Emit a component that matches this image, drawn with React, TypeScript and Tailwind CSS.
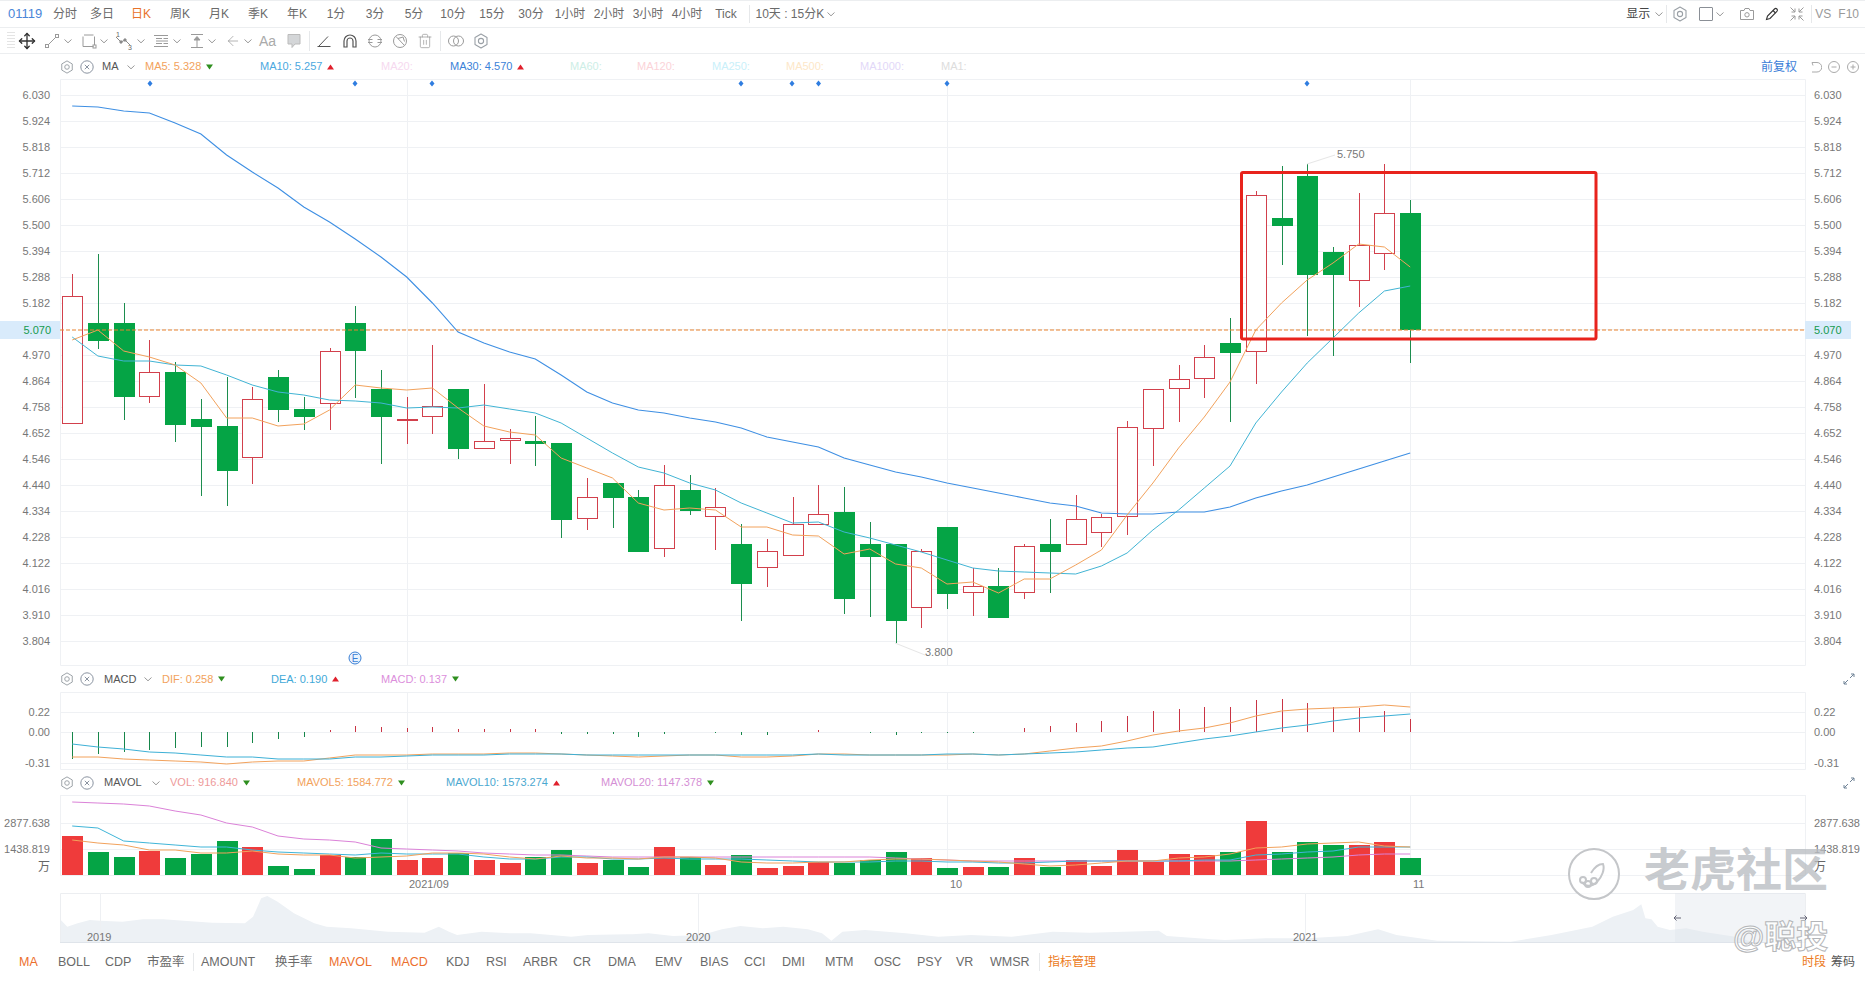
import React from "react";
import { Move, ArrowLeft, Trash2 } from "lucide-react";

type C = [string, number, number, number, number];
const X = (i: number) => 72.2 + 25.73 * i;
const candles: C[] = [
  ["r",274,296,424,424],["g",254,323,341,349],["g",303,323,397,420],["r",340,372,397,403],["g",362,372,425,442],
  ["g",399,419,427,496],["g",377,426,471,506],["r",387,399,458,484],["g",370,377,410,422],["g",397,409,417,430],
  ["r",348,351,404,430],["g",306,323,351,398],["g",370,389,417,464],["r",397,419,421,444],["r",345,406,417,434],
  ["g",389,389,449,459],["r",384,441,449,449],["r",429,438,441,464],["g",416,441,444,466],["g",443,443,520,538],
  ["r",478,497,519,530],["g",483,483,498,528],["g",490,497,552,552],["r",465,485,549,557],["g",475,490,511,515],
  ["r",488,507,517,550],["g",524,544,584,621],["r",539,551,568,587],["r",497,524,556,556],["r",485,514,525,525],
  ["g",487,512,599,614],["g",522,544,557,617],["g",544,544,621,643],["r",549,551,608,628],["g",527,527,594,609],
  ["r",568,586,593,616],["g",568,586,618,618],["r",544,546,593,599],["g",519,544,552,593],["r",495,519,545,545],
  ["r",514,517,533,547],["r",421,427,517,535],["r",389,389,429,466],["r",365,379,389,422],["r",345,357,379,398],
  ["g",318,343,353,422],["r",191,195,352,384],["g",166,218,226,265],["g",164,176,275,336],["g",247,252,275,356],
  ["r",193,245,281,307],["r",164,213,254,270],["g",200,213,330,363],
];
const ma30 = [106,107,111,113,123,134,155,172,188,207,222,239,257,277,303,332,343,352,359,375,392,403,410,413,418,422,428,437,442,447,458,465,472,477,483,488,493,498,503,506,513,514,514,512,512,507,498,491,485,477,469,461,453];
const ma10 = [337,356,361,361,365,366,375,385,392,395,400,401,403,408,407,408,405,409,413,423,438,453,467,473,483,490,503,513,523,522,532,538,545,552,560,568,571,572,573,574,566,553,530,510,488,466,423,392,363,338,313,291,286];
const ma5 = [340,330,351,357,365,383,418,418,426,424,410,385,388,390,388,408,426,432,435,458,468,478,503,510,508,510,527,527,535,536,554,549,564,568,584,582,593,579,579,565,550,515,483,448,417,382,330,303,280,263,244,247,267];
const macdBars = [759,754,752,750,748,747,747,743,739,737,730,726,727,728,727,729,729,729,729,734,734,734,737,734,732,733,735,735,732,730,732,733,735,733,733,733,732,728,726,723,721,716,711,709,707,707,700,699,703,707,708,711,719];
const dif = [757,757,759,760,761,762,764,762,761,761,758,755,755,755,754,754,754,753,753,754,755,756,757,756,755,755,757,757,756,754,754,755,755,755,755,754,755,754,751,748,746,741,735,731,728,723,716,711,709,708,707,705,707];
const dea = [744,747,749,752,753,755,757,757,759,759,759,757,757,756,755,755,755,754,754,754,755,755,755,755,755,755,755,755,755,754,755,755,755,755,754,754,755,754,753,752,750,748,747,743,739,736,732,728,725,721,718,716,714];
const vols = [836,852,857,851,858,854,841,847,866,869,855,857,839,860,858,853,860,863,857,850,863,860,867,847,857,865,855,868,866,862,863,860,852,858,868,867,867,858,867,860,866,850,862,854,855,852,821,852,842,845,845,842,858];
const mv20 = [802,803,804,806,811,815,823,827,836,839,840,842,848,849,850,851,853,854,855,855,856,857,857,857,857,857,857,857,857,857,857,857,858,859,860,861,861,861,861,861,861,861,861,861,861,861,860,859,858,857,855,854,854];
const mv10 = [826,828,841,843,845,847,847,850,852,853,854,855,853,854,854,854,857,859,859,857,857,859,859,858,859,859,859,860,861,862,862,862,861,861,862,862,863,863,862,861,861,861,861,861,860,860,855,854,852,851,847,847,847];
const mv5 = [840,843,845,850,850,853,853,851,854,855,855,858,857,856,853,853,854,857,859,856,858,858,859,857,857,858,862,863,863,862,862,860,859,859,860,861,862,864,866,865,863,861,861,858,857,854,848,847,844,843,842,846,847];

const pts = (a: number[]) => a.map((y, i) => `${X(i).toFixed(1)},${y}`).join(" ");

const navRaw: [number, number, number][] = [
  ...[[149,780],[165,800],[190,790],[220,780],[245,782],[300,785],[350,778],[400,778],[450,782],[520,788],[600,790],[620,770],[640,715],[655,708],[680,725],[720,760],[770,790],[800,800],[860,805],[950,815],[1040,818],[1075,800],[1100,815],[1120,825],[1180,815],[1250,820],[1300,820],[1400,830],[1440,825],[1568,822]].map(([a,b]) => [0,a,b] as [number,number,number]),
  ...[[0,825],[70,820],[130,828],[200,825],[250,808],[295,798],[350,805],[400,800],[460,808],[495,820],[518,842],[545,815],[600,810],[700,820],[780,830],[860,825],[960,830],[1060,815],[1150,818],[1320,812],[1340,828],[1450,838]].map(([a,b]) => [620,a,b] as [number,number,number]),
  ...[[0,840],[100,835],[200,835],[300,828],[375,808],[420,825],[520,842],[700,845],[800,825],[900,800],[950,770],[1000,750],[1020,733],[1030,775],[1045,778],[1060,800],[1090,810],[1130,805],[1170,815],[1250,830],[1300,848]].map(([a,b]) => [1225,a,b] as [number,number,number]),
];
const navPts = navRaw.map(([o, a, b]) => `${(o + a / 2.45).toFixed(1)},${(660 + b / 3).toFixed(1)}`).join(" ");

const priceLabels = ["6.030","5.924","5.818","5.712","5.606","5.500","5.394","5.288","5.182","","4.970","4.864","4.758","4.652","4.546","4.440","4.334","4.228","4.122","4.016","3.910","3.804"];
const diamonds = [150,355,432,741,792,818.5,947,1307];
const grid = "#eff1f4";
const TXT = "fill-[#777] text-[11px]";

function Chev({ c = "#999" }: { c?: string }) {
  return (
    <svg width="10" height="10" viewBox="0 0 10 10" fill="none" stroke={c} strokeWidth="1" className="shrink-0">
      <path d="M1.5 3.5 5 6.8 8.5 3.5" />
    </svg>
  );
}
function Tri({ up, className }: { up?: boolean; className?: string }) {
  return (
    <svg width="7" height="6" viewBox="0 0 7 6" className={className}>
      {up ? <path d="M3.5 0.5 7 5.5H0z" fill="#e0202c" /> : <path d="M3.5 5.5 7 0.5H0z" fill="#2f8f1f" />}
    </svg>
  );
}
function Gear({ s = 14, c = "#9aa0a6" }: { s?: number; c?: string }) {
  return (
    <svg width={s} height={s} viewBox="0 0 16 16" fill="none" stroke={c} strokeWidth="1.1" className="shrink-0">
      <path d="M8 1 14 4.5V11.5L8 15 2 11.5V4.5z" strokeLinejoin="round" />
      <circle cx="8" cy="8" r="2.6" />
    </svg>
  );
}
function CloseC() {
  return (
    <svg width="14" height="14" viewBox="0 0 14 14" fill="none" stroke="#8a93a0" strokeWidth="1" className="shrink-0">
      <circle cx="7" cy="7" r="6.2" />
      <path d="M4.8 4.8 9.2 9.2M9.2 4.8 4.8 9.2" />
    </svg>
  );
}
function Expand() {
  return (
    <svg width="12" height="12" viewBox="0 0 12 12" fill="none" stroke="#6f8296" strokeWidth="1">
      <path d="M7 5 11 1M8 1h3v3M5 7 1 11M1 8v3h3" />
    </svg>
  );
}
function Stat({ w, c, t, up, down }: { w: string; c: string; t: string; up?: boolean; down?: boolean }) {
  return (
    <div className={`${w} flex items-center shrink-0 text-[11px] whitespace-nowrap ${c}`}>
      <span>{t}</span>
      {up && <Tri up className="ml-[5px]" />}
      {down && <Tri className="ml-[5px]" />}
    </div>
  );
}
function LegendHead({ label, w, ml }: { label: string; w: string; ml: string }) {
  return (
    <>
      <Gear />
      <span className="ml-[6px]"><CloseC /></span>
      <span className={`${ml} text-[11px] text-[#555] ${w}`}>{label}</span>
      <Chev />
      <span className="w-[9px] shrink-0" />
    </>
  );
}
const S = ({ children, w = 16, h = 16 }: { children: React.ReactNode; w?: number; h?: number }) => (
  <svg width={w} height={h} viewBox={`0 0 ${w} ${h}`} fill="none" stroke="#9a9a9a" strokeWidth="1" className="shrink-0">{children}</svg>
);
const topItems = ["日K","周K","月K","季K","年K","1分","3分","5分","10分","15分","30分","1小时","2小时","3小时","4小时","Tick"];
const tabs: [string, string, boolean][] = [
  ["MA","w-[39px]",true],["BOLL","w-[47px]",false],["CDP","w-[42px]",false],["市盈率","w-[46px]",false],["|","w-[8px]",false],
  ["AMOUNT","w-[74px]",false],["换手率","w-[54px]",false],["MAVOL","w-[62px]",true],["MACD","w-[55px]",true],["KDJ","w-[40px]",false],
  ["RSI","w-[37px]",false],["ARBR","w-[50px]",false],["CR","w-[35px]",false],["DMA","w-[47px]",false],["EMV","w-[45px]",false],
  ["BIAS","w-[44px]",false],["CCI","w-[38px]",false],["DMI","w-[43px]",false],["MTM","w-[49px]",false],["OSC","w-[43px]",false],
  ["PSY","w-[39px]",false],["VR","w-[34px]",false],["WMSR","w-[49px]",false],["|","w-[9px]",false],
];

export default function App() {
  return (
    <div className="relative w-[1865px] h-[981px] bg-white flex flex-col overflow-hidden font-['Liberation_Sans','Noto_Sans_CJK_SC',sans-serif] text-[12px] text-[#6a6a6a]">
      {/* Top bar */}
      <div className="h-[28px] shrink-0 border-t border-b border-[#eceef0] flex items-center pl-[8px] pr-[6px]">
        <span className="w-[39px] text-[13px] text-[#4a86d8]">01119</span>
        <span className="w-[37px] pl-[6px]">分时</span>
        <span className="w-[37.5px] pl-[6px]">多日</span>
        {topItems.map((t) => (
          <span key={t} className={`w-[39px] text-center whitespace-nowrap ${t === "日K" ? "text-[#e8722a]" : ""}`}>{t}</span>
        ))}
        <span className="ml-[3px] w-px h-[18px] bg-[#e6e8ea]" />
        <span className="ml-[6px] whitespace-nowrap">10天 : 15分K</span>
        <span className="ml-[2px]"><Chev /></span>
        <span className="ml-auto whitespace-nowrap text-[#444]">显示</span>
        <span className="ml-[4px]"><Chev /></span>
        <span className="ml-[2px] w-px h-[18px] bg-[#e6e8ea]" />
        <span className="ml-[5px]"><Gear s={16} /></span>
        <span className="ml-[11px] w-[14px] h-[14px] border border-[#8a8f96] rounded-[1px]" />
        <span className="ml-[2px]"><Chev /></span>
        <span className="ml-[14px]">
          <S><path d="M1.5 4.5H5L6 2.5H10L11 4.5H14.5V13.5H1.5z" /><circle cx="8" cy="8.8" r="2.2" /></S>
        </span>
        <span className="ml-[9px]">
          <svg width="16" height="16" viewBox="0 0 16 16" fill="none" stroke="#333" strokeWidth="1.1"><path d="M2.5 13.5 3.5 10 10.5 3a1.6 1.6 0 0 1 2.4 2.4L6 12.5z" /><path d="M9 4.5 11.5 7" /></svg>
        </span>
        <span className="ml-[9px]">
          <S><path d="M1.5 1.5 6 6M6 2.5V6H2.5M14.5 1.5 10 6M10 2.5V6H13.5M1.5 14.5 6 10M6 13.5V10H2.5M14.5 14.5 10 10M10 13.5V10H13.5" /></S>
        </span>
        <span className="ml-[6px] w-px h-[18px] bg-[#e6e8ea]" />
        <span className="ml-[3px] text-[#999] whitespace-nowrap">VS</span>
        <span className="ml-[7px] text-[#999] whitespace-nowrap">F10</span>
      </div>

      {/* Drawing toolbar */}
      <div className="h-[26px] shrink-0 border-b border-[#eceef0] flex items-center">
        <span className="ml-[7px] w-[8px] h-[18px] shrink-0 bg-[repeating-linear-gradient(to_bottom,#e4e4e4_0,#e4e4e4_1px,transparent_1px,transparent_3px)]" />
        <span className="ml-[3px]"><Move size={18} strokeWidth={1.8} color="#333" /></span>
        <span className="ml-[8px]"><S><rect x="1.5" y="11.5" width="3" height="3" /><rect x="11.5" y="1.5" width="3" height="3" /><path d="M4.5 11.5 11.5 4.5" /></S></span>
        <span className="ml-[3px]"><Chev /></span>
        <span className="ml-[8px]"><S><path d="M3 2H12.5M2 3.5V13.5H12.5M13.5 3.5V12" /><rect x="12" y="12" width="3" height="3" /></S></span>
        <span className="ml-[2px]"><Chev /></span>
        <span className="ml-[6px]">
          <svg width="18" height="18" viewBox="0 0 18 18" fill="none" stroke="#8a8a8a" strokeWidth="1">
            <path d="M1 5 6 10 10 8 15 13" />
            <circle cx="6" cy="10" r="1.2" fill="#8a8a8a" /><circle cx="10" cy="8" r="1.2" fill="#8a8a8a" />
            <text x="1" y="5" fontSize="7" fill="#666" stroke="none">1</text>
            <text x="13" y="18" fontSize="7" fill="#666" stroke="none">3</text>
          </svg>
        </span>
        <span className="ml-[3px]"><Chev /></span>
        <span className="ml-[7px]"><S><path d="M1 2.5H15M3 5.5H9M3 8H15M3 10.5H9M1 13.5H15" /><path d="M10.5 5.5H15M10.5 10.5H15" /></S></span>
        <span className="ml-[3px]"><Chev /></span>
        <span className="ml-[7px]"><S><path d="M2 1.5H14M2 14.5H14M8 14.5V5" /><path d="M5 7 8 3.5 11 7z" fill="#9a9a9a" /></S></span>
        <span className="ml-[2px]"><Chev /></span>
        <span className="ml-[8px]"><ArrowLeft size={16} strokeWidth={1} color="#8f8f8f" /></span>
        <span className="ml-[2px]"><Chev /></span>
        <span className="ml-[6px] w-[18px] text-[14px] text-[#aaa] leading-none">Aa</span>
        <span className="ml-[9px]"><svg width="16" height="16" viewBox="0 0 16 16"><path d="M2 1.5H14V11H9L6 14.5V11H2z" fill="#d4d6d8" stroke="#bbb" /></svg></span>
        <span className="ml-[7px] w-px h-[20px] bg-[#e6e8ea] shrink-0" />
        <span className="ml-[6px]"><svg width="16" height="16" viewBox="0 0 16 16" fill="none" stroke="#555" strokeWidth="1"><path d="M3 13 12 3.5M1.5 13.5H14.5" /></svg></span>
        <span className="ml-[10px]"><svg width="16" height="16" viewBox="0 0 16 16" fill="none" stroke="#555" strokeWidth="1.2"><path d="M2 14V8a6 6 0 0 1 12 0v6h-3V8a3 3 0 0 0-6 0v6z" /></svg></span>
        <span className="ml-[9px]"><S><circle cx="8" cy="8" r="6" /><path d="M1 6.5H5.5M10.5 6.5H15M1 9.5H5.5M10.5 9.5H15" /></S></span>
        <span className="ml-[9px]"><S><circle cx="8" cy="8" r="6.5" /><path d="M4 3.5 12.5 12.5M6 5.5 11 4 12.5 8.5" /></S></span>
        <span className="ml-[9px]"><Trash2 size={16} strokeWidth={1} color="#8f8f8f" /></span>
        <span className="ml-[7px] w-px h-[20px] bg-[#e6e8ea] shrink-0" />
        <span className="ml-[6px]"><svg width="18" height="16" viewBox="0 0 18 16" fill="none" stroke="#9a9a9a"><circle cx="6.5" cy="8" r="5" /><circle cx="11.5" cy="8" r="5" /></svg></span>
        <span className="ml-[8px]"><Gear s={16} /></span>
      </div>

      {/* MA legend */}
      <div className="h-[25px] shrink-0 flex items-center pl-[60px] pr-[6px]">
        <LegendHead label="MA" w="w-[24px]" ml="ml-[8px]" />
        <Stat w="w-[115px]" c="text-[#f2a25c]" t="MA5: 5.328" down />
        <Stat w="w-[121px]" c="text-[#4ba8e0]" t="MA10: 5.257" up />
        <Stat w="w-[69px]" c="text-[#f6d9ef]" t="MA20:" />
        <Stat w="w-[120px]" c="text-[#3b82d8]" t="MA30: 4.570" up />
        <Stat w="w-[67px]" c="text-[#cdeee6]" t="MA60:" />
        <Stat w="w-[75px]" c="text-[#fbd3d8]" t="MA120:" />
        <Stat w="w-[74px]" c="text-[#c9f0fa]" t="MA250:" />
        <Stat w="w-[74px]" c="text-[#fde7c8]" t="MA500:" />
        <Stat w="w-[81px]" c="text-[#e2d8f8]" t="MA1000:" />
        <Stat w="w-[60px]" c="text-[#dddddd]" t="MA1:" />
        <span className="ml-auto text-[#3b7dd8]">前复权</span>
        <span className="ml-[13px]">
          <svg width="12" height="12" viewBox="0 0 12 12" fill="none" stroke="#aaa"><path d="M2 1.5 3 4.5M2 1.5H7a4.5 4.5 0 0 1 0 9.5H2" /></svg>
        </span>
        <span className="ml-[6px]"><svg width="12" height="12" viewBox="0 0 12 12" fill="none" stroke="#aaa"><circle cx="6" cy="6" r="5.5" /><path d="M3.5 6h5" /></svg></span>
        <span className="ml-[7px]"><svg width="12" height="12" viewBox="0 0 12 12" fill="none" stroke="#aaa"><circle cx="6" cy="6" r="5.5" /><path d="M3.5 6h5M6 3.5v5" /></svg></span>
      </div>

      {/* Main candles */}
      <svg width="1865" height="587" viewBox="0 79 1865 587" className="shrink-0 block">
        <path d="M60.5 79.5H1805.5V665.5H60.5z" fill="none" stroke={grid} />
        {priceLabels.map((l, i) => (
          <g key={i}>
            <line x1="60" x2="1805" y1={95.5 + 26 * i} y2={95.5 + 26 * i} stroke={grid} />
            {l && <text x="50" y={99 + 26 * i} textAnchor="end" className={TXT}>{l}</text>}
            {l && <text x="1814" y={99 + 26 * i} className={TXT}>{l}</text>}
          </g>
        ))}
        {[407.5, 947.5, 1410.5].map((x) => <line key={x} x1={x} x2={x} y1="79" y2="666" stroke={grid} />)}
        {diamonds.map((x) => <path key={x} d={`M${x} 80.5l2.5 3-2.5 3-2.5-3z`} fill="#2f7de0" />)}
        <rect x="0" y="321" width="60" height="18" fill="#d9ebfb" />
        <rect x="1805" y="321" width="46" height="18" fill="#d9ebfb" />
        <text x="51" y="334" textAnchor="end" className="fill-[#159a4e] text-[11px]">5.070</text>
        <text x="1814" y="334" className="fill-[#159a4e] text-[11px]">5.070</text>
        {candles.map(([t, a, b, c, d], i) => {
          const x = Math.round(X(i));
          const col = t === "r" ? "#d2404c" : "#05a445";
          return (
            <g key={i}>
              <line x1={x + 0.5} x2={x + 0.5} y1={a} y2={d} stroke={t === "r" ? col : "#1c8d4e"} />
              {t === "r" ? (
                <rect x={x - 9.5} y={b + 0.5} width="20" height={c - b - 1} fill="#fff" stroke={col} />
              ) : (
                <rect x={x - 10} y={b} width="21" height={c - b} fill={col} />
              )}
            </g>
          );
        })}
        <polyline points={pts(ma30)} fill="none" stroke="#3e8fe3" strokeWidth="1.1" />
        <polyline points={pts(ma10)} fill="none" stroke="#41b4d4" strokeWidth="1" />
        <polyline points={pts(ma5)} fill="none" stroke="#f2a25c" strokeWidth="1" />
        <line x1="60" x2="1805" y1="330" y2="330" stroke="#e8822f" strokeDasharray="4 2" />
        <path d="M1307 164 1335 155M895 643 925 655" stroke="#e6e6e6" fill="none" />
        <text x="1337" y="158" className={TXT}>5.750</text>
        <text x="925" y="656" className={TXT}>3.800</text>
        <circle cx="355" cy="658" r="6" fill="#eaf3fd" stroke="#3a7fd5" />
        <text x="355" y="661.5" textAnchor="middle" className="fill-[#3a7fd5] text-[10px]">E</text>
        <rect x="1241.5" y="172.5" width="354.5" height="166.5" rx="1.5" fill="none" stroke="#e8231c" strokeWidth="3" />
      </svg>

      {/* MACD */}
      <div className="h-[26px] shrink-0 flex items-center pl-[60px] pr-[10px]">
        <LegendHead label="MACD" w="w-[39px]" ml="ml-[10px]" />
        <Stat w="w-[109px]" c="text-[#f2a25c]" t="DIF: 0.258" down />
        <Stat w="w-[110px]" c="text-[#3fa9d8]" t="DEA: 0.190" up />
        <Stat w="w-[100px]" c="text-[#dc8fdc]" t="MACD: 0.137" down />
        <span className="ml-auto"><Expand /></span>
      </div>
      <svg width="1865" height="78" viewBox="0 692 1865 78" className="shrink-0 block">
        <path d="M60.5 692.5H1805.5V769.5H60.5z" fill="none" stroke={grid} />
        {[712.5, 732.5, 763.5].map((y) => <line key={y} x1="60" x2="1805" y1={y} y2={y} stroke={grid} />)}
        {[407.5, 947.5, 1410.5].map((x) => <line key={x} x1={x} x2={x} y1="692" y2="770" stroke={grid} />)}
        {[["0.22", 716], ["0.00", 736], ["-0.31", 767]].map(([l, y]) => (
          <g key={l as string}>
            <text x="50" y={y as number} textAnchor="end" className={TXT}>{l}</text>
            <text x="1814" y={y as number} className={TXT}>{l}</text>
          </g>
        ))}
        {macdBars.map((y, i) => {
          const x = Math.round(X(i)) + 0.5;
          return <line key={i} x1={x} x2={x} y1="732" y2={y} stroke={y > 732 ? "#16864a" : "#c93444"} />;
        })}
        <polyline points={pts(dif)} fill="none" stroke="#f2a25c" />
        <polyline points={pts(dea)} fill="none" stroke="#3db0d6" />
      </svg>

      {/* MAVOL */}
      <div className="h-[25px] shrink-0 flex items-center pl-[60px] pr-[10px]">
        <LegendHead label="MAVOL" w="w-[47px]" ml="ml-[10px]" />
        <Stat w="w-[127px]" c="text-[#ee9a9a]" t="VOL: 916.840" down />
        <Stat w="w-[149px]" c="text-[#f2a25c]" t="MAVOL5: 1584.772" down />
        <Stat w="w-[155px]" c="text-[#4ba8d0]" t="MAVOL10: 1573.274" up />
        <Stat w="w-[120px]" c="text-[#d58fd5]" t="MAVOL20: 1147.378" down />
        <span className="ml-auto"><Expand /></span>
      </div>
      <svg width="1865" height="98" viewBox="0 795 1865 98" className="shrink-0 block">
        <path d="M60.5 795.5H1805.5" fill="none" stroke={grid} />
        <path d="M60.5 795V875.5H1805.5V795" fill="none" stroke={grid} />
        {[823.5, 849.5].map((y) => <line key={y} x1="60" x2="1805" y1={y} y2={y} stroke={grid} />)}
        {[407.5, 947.5, 1410.5].map((x) => <line key={x} x1={x} x2={x} y1="795" y2="875" stroke={grid} />)}
        {[["2877.638", 827], ["1438.819", 853]].map(([l, y]) => (
          <g key={l as string}>
            <text x="50" y={y as number} textAnchor="end" className={TXT}>{l}</text>
            <text x="1814" y={y as number} className={TXT}>{l}</text>
          </g>
        ))}
        <text x="50" y="871" textAnchor="end" className="fill-[#666] text-[12px]">万</text>
        <text x="1814" y="871" className="fill-[#666] text-[12px]">万</text>
        {vols.map((y, i) => {
          const x = Math.round(X(i));
          const red = candles[i][0] === "r" || i === 7;
          return <rect key={i} x={x - 10} y={y} width="21" height={875 - y} fill={red ? "#ef3b3b" : "#05a445"} />;
        })}
        <polyline points={pts(mv20)} fill="none" stroke="#db82d8" />
        <polyline points={pts(mv10)} fill="none" stroke="#3fb5d8" />
        <polyline points={pts(mv5)} fill="none" stroke="#f2a25c" />
        <text x="409" y="888" className={TXT}>2021/09</text>
        <text x="950" y="888" className={TXT}>10</text>
        <text x="1413" y="888" className={TXT}>11</text>
      </svg>

      {/* Navigator */}
      <svg width="1865" height="50" viewBox="0 893 1865 50" className="shrink-0 block">
        <polygon points={`61,943 ${navPts} 1761,943`} fill="#edf1f5" />
        <path d="M60.5 943V893.5H1805.5V943" fill="none" stroke="#eceef1" />
        <path d="M60 942.5H1805" stroke="#dfe4ea" />
        {[100.5, 698.5, 1305.5].map((x) => <line key={x} x1={x} x2={x} y1="893" y2="943" stroke="#eef0f3" />)}
        <text x="87" y="941" className={TXT}>2019</text>
        <text x="686" y="941" className={TXT}>2020</text>
        <text x="1293" y="941" className={TXT}>2021</text>
        <rect x="1675" y="893" width="130" height="50" fill="#dfe4ec" fillOpacity="0.42" />
        <path d="M1674 918h7M1674 918l2.5-2.5M1674 918l2.5 2.5M1800 918h7M1807 918l-2.5-2.5M1807 918l-2.5 2.5" stroke="#667" fill="none" />
      </svg>

      {/* Tabs */}
      <div className="flex-1 flex items-center pl-[19px] pr-[10px] whitespace-nowrap text-[12.5px]">
        {tabs.map(([t, w, on], i) => (
          <span key={i} className={`${w} shrink-0 ${on ? "text-[#ec6f2d]" : ""}`}>
            {t === "|" ? <span className="block w-px h-[18px] bg-[#e6e8ea]" /> : t}
          </span>
        ))}
        <span className="text-[#ec7a20] text-[12px]">指标管理</span>
        <span className="ml-auto text-[#ec7a20] text-[12px]">时段</span>
        <span className="ml-[5px] text-[#555] text-[12px]">筹码</span>
      </div>

      {/* Watermark */}
      <svg width="56" height="56" viewBox="0 0 56 56" fill="none" stroke="#c4c6c9" strokeWidth="2" className="absolute left-[1566px] top-[846px] pointer-events-none">
        <circle cx="28" cy="28" r="25" fill="#ffffff" fillOpacity="0.7" />
        <path d="M16 36c3 5 10 5 15 0s8-13 6-18c-5 0-9 4-12 9" />
        <circle cx="17" cy="34" r="3" /><circle cx="22" cy="38" r="3" /><circle cx="28" cy="35" r="3" />
      </svg>
      <div className="absolute left-[1644px] top-[840px] text-[46px] leading-[60px] font-bold text-[#b9bdc2]/80 whitespace-nowrap pointer-events-none">老虎社区</div>
      <div className="absolute left-[1733px] top-[915px] text-[32px] leading-[44px] font-bold text-white/80 [-webkit-text-stroke:1px_#b4b6b9] whitespace-nowrap pointer-events-none">@聪投</div>
    </div>
  );
}
